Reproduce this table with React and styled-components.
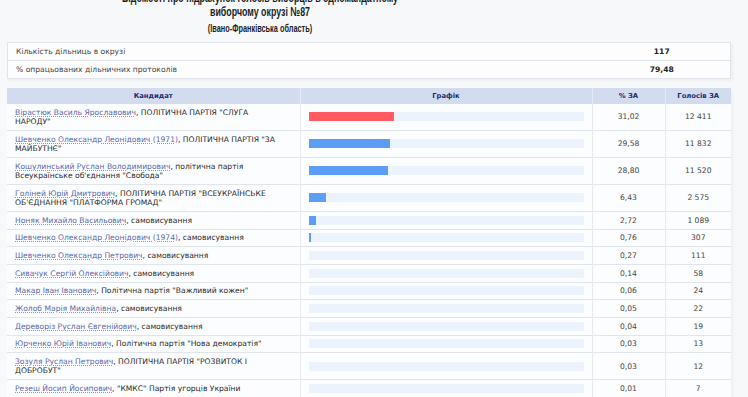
import React from 'react';
import styled, { createGlobalStyle } from 'styled-components';

const GlobalStyle = createGlobalStyle`
  html, body {
    margin: 0;
    padding: 0;
    background: #f7f8fa;
    overflow: hidden;
  }
  body {
    font-family: "DejaVu Sans", Verdana, sans-serif;
  }
`

const TRACK_WIDTH = 276

const candidates = [
  { name: 'Вірастюк Василь Ярославович', party: ['ПОЛІТИЧНА ПАРТІЯ "СЛУГА', 'НАРОДУ"'], pct: '31,02', votes: '12 411', top: true },
  { name: 'Шевченко Олександр Леонідович (1971)', party: ['ПОЛІТИЧНА ПАРТІЯ "ЗА', 'МАЙБУТНЄ"'], pct: '29,58', votes: '11 832' },
  { name: 'Кошулинський Руслан Володимирович', party: ['політична партія', 'Всеукраїнське об\'єднання "Свобода"'], pct: '28,80', votes: '11 520' },
  { name: 'Голіней Юрій Дмитрович', party: ['ПОЛІТИЧНА ПАРТІЯ "ВСЕУКРАЇНСЬКЕ', 'ОБ\'ЄДНАННЯ "ПЛАТФОРМА ГРОМАД"'], pct: '6,43', votes: '2 575' },
  { name: 'Ноняк Михайло Васильович', party: ['самовисування'], pct: '2,72', votes: '1 089' },
  { name: 'Шевченко Олександр Леонідович (1974)', party: ['самовисування'], pct: '0,76', votes: '307' },
  { name: 'Шевченко Олександр Петрович', party: ['самовисування'], pct: '0,27', votes: '111' },
  { name: 'Сивачук Сергій Олексійович', party: ['самовисування'], pct: '0,14', votes: '58' },
  { name: 'Макар Іван Іванович', party: ['Політична партія "Важливий кожен"'], pct: '0,06', votes: '24' },
  { name: 'Жолоб Марія Михайлівна', party: ['самовисування'], pct: '0,05', votes: '22' },
  { name: 'Дереворіз Руслан Євгенійович', party: ['самовисування'], pct: '0,04', votes: '19' },
  { name: 'Юрченко Юрій Іванович', party: ['Політична партія "Нова демократія"'], pct: '0,03', votes: '13' },
  { name: 'Зозуля Руслан Петрович', party: ['ПОЛІТИЧНА ПАРТІЯ "РОЗВИТОК І', 'ДОБРОБУТ"'], pct: '0,03', votes: '12' },
  { name: 'Резеш Йосип Йосипович', party: ['"КМКС" Партія угорців України'], pct: '0,01', votes: '7' },
]

const App = () => {
  return (
    <Page>
      <GlobalStyle />
      <Header>
        <Title>
          Відомості про підрахунок голосів виборців в одномандатному
          <br />
          виборчому окрузі №87
        </Title>
        <Region>(Івано-Франківська область)</Region>
      </Header>

      <InfoTable>
        <colgroup>
          <col />
          <col style={{ width: 137 }} />
        </colgroup>
        <tbody>
          <InfoRow>
            <InfoLabel>Кількість дільниць в окрузі</InfoLabel>
            <InfoValue>117</InfoValue>
          </InfoRow>
          <InfoRow>
            <InfoLabel>% опрацьованих дільничних протоколів</InfoLabel>
            <InfoValue>79,48</InfoValue>
          </InfoRow>
        </tbody>
      </InfoTable>

      <ResultTable>
        <colgroup>
          <col style={{ width: 293 }} />
          <col style={{ width: 292 }} />
          <col style={{ width: 73 }} />
          <col style={{ width: 66 }} />
        </colgroup>
        <thead>
          <tr>
            <HeadCell>Кандидат</HeadCell>
            <HeadCell>Графік</HeadCell>
            <HeadCell>% ЗА</HeadCell>
            <HeadCell $last>Голосів ЗА</HeadCell>
          </tr>
        </thead>
        <tbody>
          {candidates.map((c) => {
            const share = parseFloat(c.pct.replace(',', '.'))
            return (
              <Row key={c.name}>
                <NameCell>
                  <NameLink>{c.name}</NameLink>, {c.party[0]}
                  {c.party[1] && (<><br />{c.party[1]}</>)}
                </NameCell>
                <GraphCell>
                  <Track>
                    <Bar $top={c.top} style={{ width: Math.floor(share * TRACK_WIDTH / 100) }} />
                  </Track>
                </GraphCell>
                <NumCell>{c.pct}</NumCell>
                <NumCell $last>{c.votes}</NumCell>
              </Row>
            )
          })}
        </tbody>
      </ResultTable>
    </Page>
  )
}

export default App

const Page = styled.div`
  padding: 0 17px 0 7px;
  width: 724px;
`

// narrow bold heading, squeezed to the condensed look of the original
const Header = styled.div`
  width: 506px;
  margin-top: -9px;
  text-align: center;
  color: #1e1e1e;
  font-family: "Liberation Sans", Arial, sans-serif;
  font-weight: bold;
  transform: scaleX(0.68);
`

const Title = styled.div`
  font-size: 13px;
  line-height: 14px;
`

const Region = styled.div`
  font-size: 10.8px;
  line-height: 12px;
  margin-top: 3px;
`

const InfoTable = styled.table`
  width: 724px;
  margin-top: 8px;
  border-collapse: collapse;
  table-layout: fixed;
  background: #fdfdfe;
  border: 1px solid #e1e4ea;
  box-shadow: 2px 2px 3px rgba(0, 0, 0, 0.04);
`

const InfoRow = styled.tr`
  border-bottom: 1px solid #e1e4ea;
`

const InfoLabel = styled.td`
  padding: 4px 8px;
  line-height: 9px;
  font-size: 7.6px;
  color: #444;
`

const InfoValue = styled.td`
  padding: 4px 8px;
  line-height: 9px;
  font-size: 7.6px;
  font-weight: bold;
  color: #222;
  text-align: center;
`

const ResultTable = styled.table`
  width: 724px;
  margin-top: 9px;
  border-collapse: collapse;
  table-layout: fixed;
  background: #fcfdfe;
  box-shadow: 2px 2px 3px rgba(0, 0, 0, 0.04);
`

const HeadCell = styled.th`
  height: 16px;
  padding: 0 4px;
  background: #d3dbef;
  color: #1e2a70;
  font-size: 6.8px;
  font-weight: bold;
  text-align: center;
  border-right: ${props => props.$last ? 'none' : '1px solid #e6e9f0'};
`

const Row = styled.tr`
  border-bottom: 1px solid #e1e4ea;
`

const NameCell = styled.td`
  padding: 3.7px 8px;
  line-height: 9.3px;
  font-size: 7.6px;
  color: #2a2a2a;
  white-space: nowrap;
  overflow: hidden;
  border-right: 1px solid #e6e9ee;
`

const NameLink = styled.span`
  color: #5a68a8;
  text-decoration: underline dotted #8d97c4;
  text-underline-offset: 1px;
`

const GraphCell = styled.td`
  padding: 0 8px;
  border-right: 1px solid #e6e9ee;
`

const Track = styled.div`
  height: 9px;
  background: #edf3fd;
`

const Bar = styled.div`
  height: 9px;
  background: ${props => props.$top ? '#ff5b60' : '#5c9ef6'};
`

const NumCell = styled.td`
  padding: 3.7px 4px;
  line-height: 9.3px;
  font-size: 7.6px;
  color: #444;
  text-align: center;
  border-right: ${props => props.$last ? 'none' : '1px solid #e6e9ee'};
`
